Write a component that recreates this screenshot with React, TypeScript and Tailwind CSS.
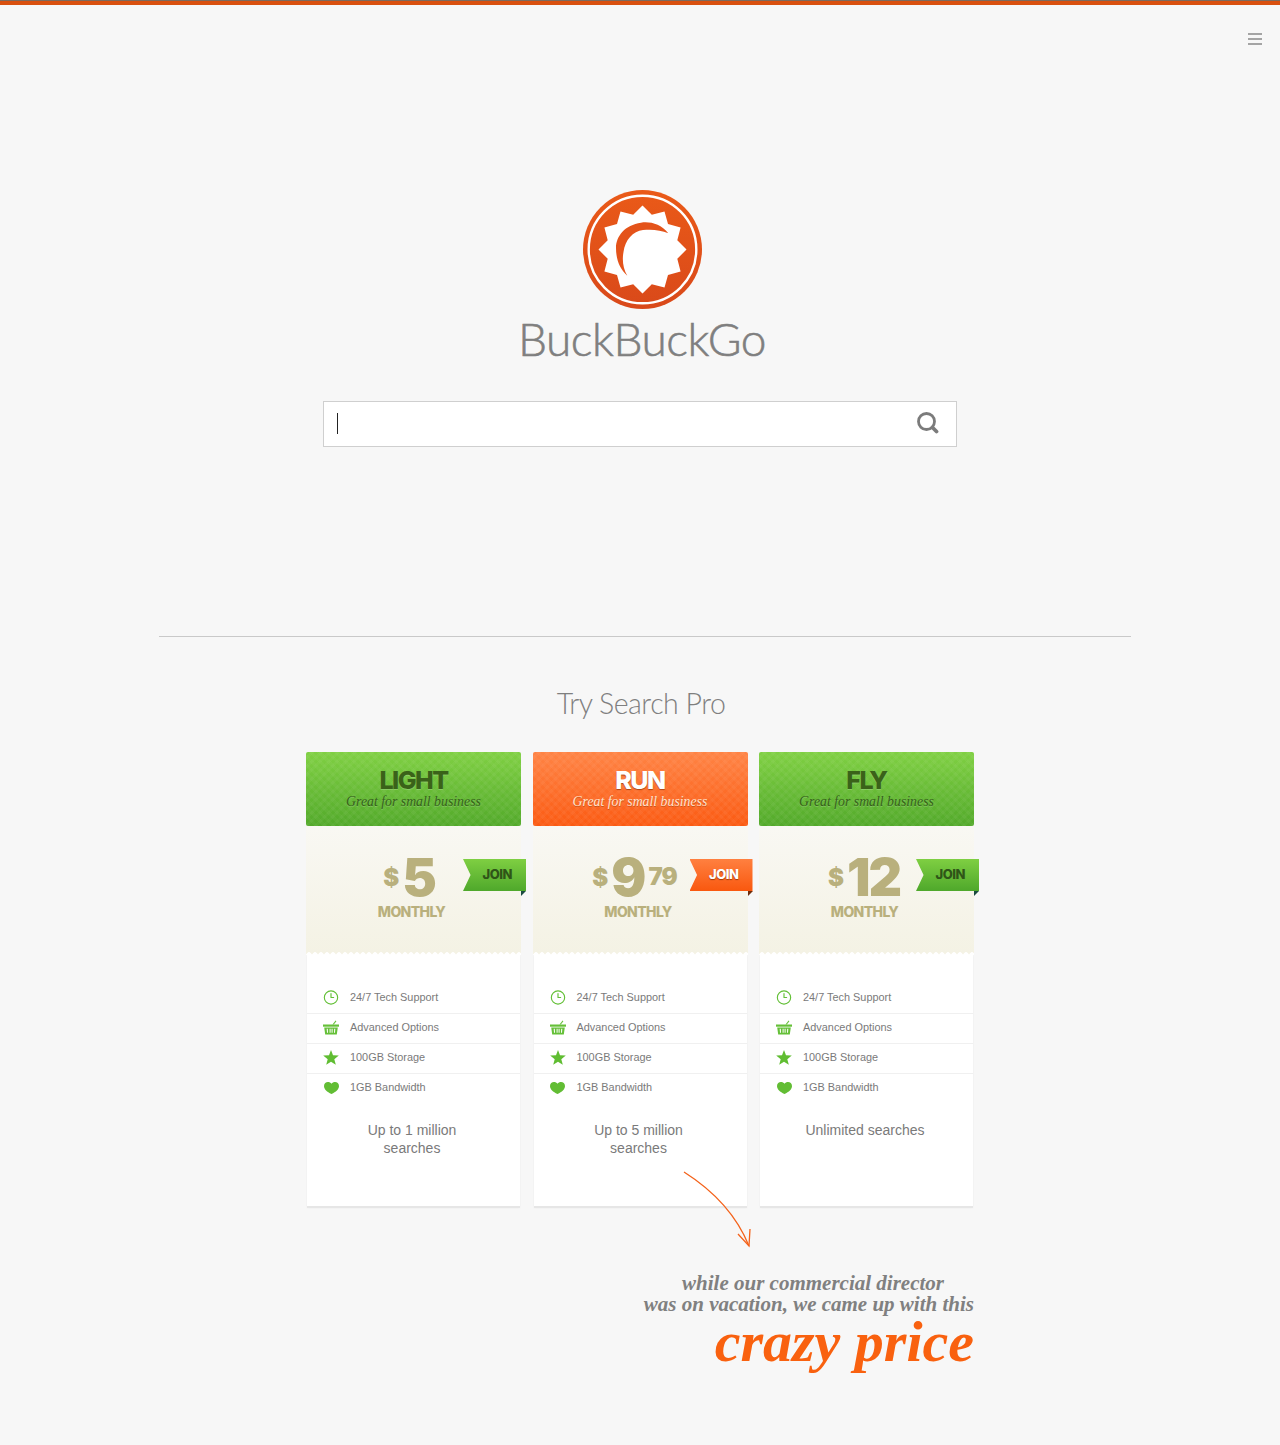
import React from "react";
import { Clock3 } from "lucide-react";

const features = ["24/7 Tech Support", "Advanced Options", "100GB Storage", "1GB Bandwidth"];

const plans = [
  {
    name: "LIGHT",
    head: "bg-[repeating-linear-gradient(45deg,rgba(255,255,255,.035)_0_3px,transparent_3px_6px),repeating-linear-gradient(-45deg,rgba(255,255,255,.035)_0_3px,transparent_3px_6px),linear-gradient(#80d043,#52a92a)]",
    title: "text-[#3a6219] [text-shadow:0_1px_0_rgba(255,255,255,.2)]",
    sub: "text-[#35601a] [text-shadow:0_1px_0_rgba(255,255,255,.2)]",
    ribbon: "bg-[linear-gradient(#7fcf42,#4fa82b)]",
    join: "text-[#2f5518]",
    fold: "border-t-[#1a4a40]",
    price: "pr-[9px]",
    amount: "5",
    cents: "",
    info: ["Up to 1 million", "searches"],
  },
  {
    name: "RUN",
    head: "bg-[repeating-linear-gradient(45deg,rgba(255,255,255,.035)_0_3px,transparent_3px_6px),repeating-linear-gradient(-45deg,rgba(255,255,255,.035)_0_3px,transparent_3px_6px),linear-gradient(#ff8445,#fb5a12)]",
    title: "text-white [text-shadow:0_1px_1px_rgba(120,40,0,.6)]",
    sub: "text-[#ffe3d0] [text-shadow:0_1px_0_rgba(120,40,0,.4)]",
    ribbon: "bg-[linear-gradient(#ff8040,#f9580f)]",
    join: "text-white [text-shadow:0_1px_1px_rgba(120,40,0,.7)]",
    fold: "border-t-[#6e2c0c]",
    price: "pr-[11px]",
    amount: "9",
    cents: "79",
    info: ["Up to 5 million", "searches"],
  },
  {
    name: "FLY",
    head: "bg-[repeating-linear-gradient(45deg,rgba(255,255,255,.035)_0_3px,transparent_3px_6px),repeating-linear-gradient(-45deg,rgba(255,255,255,.035)_0_3px,transparent_3px_6px),linear-gradient(#80d043,#52a92a)]",
    title: "text-[#3a6219] [text-shadow:0_1px_0_rgba(255,255,255,.2)]",
    sub: "text-[#35601a] [text-shadow:0_1px_0_rgba(255,255,255,.2)]",
    ribbon: "bg-[linear-gradient(#7fcf42,#4fa82b)]",
    join: "text-[#2f5518]",
    fold: "border-t-[#1a4a40]",
    price: "pr-[5px]",
    amount: "12",
    cents: "",
    info: ["Unlimited searches"],
  },
];

const sunPoints = Array.from({ length: 24 }, (_, i) => {
  const r = i % 2 === 0 ? 44 : 36;
  const a = (i * Math.PI) / 12 - Math.PI / 2;
  return `${(59.5 + r * Math.cos(a)).toFixed(1)},${(59.5 + r * Math.sin(a)).toFixed(1)}`;
}).join(" ");

const Logo = () => (
  <svg width="120" height="120" viewBox="0 0 120 120">
    <defs>
      <linearGradient id="logoFill" x1="0" y1="0" x2="0" y2="1">
        <stop offset="0" stopColor="#ea5a18" />
        <stop offset="1" stopColor="#d9491a" />
      </linearGradient>
    </defs>
    <circle cx="59.5" cy="59.5" r="59.5" fill="url(#logoFill)" />
    <circle cx="59.5" cy="59.5" r="53.8" fill="none" stroke="#fff" strokeWidth="2.4" />
    <polygon points={sunPoints} fill="#fff" />
    <path
      d="M85.3 43.3C78 34 67 31.3 58 32.7C42 35 33 46 33 58C33 70 37 79 44.3 85.7C40 78 39 70 40.5 62C42 50 50 41 60 40C69 39 78 40 85.3 43.3Z"
      fill="#e4531a"
    />
  </svg>
);

const BasketIcon = () => (
  <svg width="16" height="15" viewBox="0 0 16 15" fill="#65c038">
    <path d="M9.5 4.5L12.6 .6l.8.6-2.6 3.3z" />
    <rect x="0" y="4.5" width="16" height="2.2" />
    <path d="M1.2 7.5h13.6l-1 7H2.2zM3.7 8.8l.3 4h1l-.2-4zM6.6 8.8v4h1v-4zM8.6 8.8v4h1v-4zM11.2 8.8l-.2 4h1l.3-4z" fillRule="evenodd" />
  </svg>
);

const StarIcon = () => (
  <svg width="16" height="15" viewBox="0 0 16 15" fill="#60bd32">
    <path d="M8 0l2 5.3 5.8.3-4.5 3.6 1.500 5.600L8 11.700l-4.800 3.100 1.500-5.600L.2 5.600 6 5.300z" />
  </svg>
);

const HeartIcon = () => (
  <svg width="15" height="12" viewBox="0 0 15 12" fill="#62bd34">
    <path d="M7.500 12C3 9.600 0 7.300 0 3.900 0 1.500 1.900 0 3.900 0c1.500 0 2.800.7 3.600 1.700C8.300.7 9.600 0 11.100 0 13.100 0 15 1.500 15 3.900c0 3.400-3 5.700-7.500 8.100z" />
  </svg>
);

const featureIcon = (index: number) => {
  if (index === 0) return <Clock3 size={17} strokeWidth={1.7} color="#62bf35" />;
  if (index === 1) return <BasketIcon />;
  if (index === 2) return <StarIcon />;
  return <HeartIcon />;
};

const App = () => {
  return (
    <div className="relative min-h-[1445px] bg-[#f7f7f7] font-['Liberation_Sans',sans-serif]">
      <div className="h-[5px] border-t border-t-[#7d6a5c] bg-[#d9500f]" />
      <div className="flex justify-end pt-[28px] pr-[18px]">
        <div className="flex w-[14px] flex-col gap-[3px]">
          <span className="h-[2px] bg-[#a4a4a4]" />
          <span className="h-[2px] bg-[#a4a4a4]" />
          <span className="h-[2px] bg-[#a4a4a4]" />
        </div>
      </div>

      <div className="flex flex-col items-center pt-[145px]">
        <div className="ml-[5px]">
          <Logo />
        </div>
        <h1 className="mt-[1px] ml-[4px] font-['Lato',sans-serif] text-[46px] leading-[56px] font-light tracking-[-.5px] text-[#7f7f7f] [-webkit-text-stroke:.6px_#7f7f7f]">
          BuckBuckGo
        </h1>
        <div className="mt-[34px] flex h-[46px] w-[634px] items-center justify-between border border-[#cfcfcf] bg-white pr-[17px] pl-[13px]">
          <span className="mb-[1px] h-[21px] w-px bg-[#222]" />
          <svg className="mb-[2px]" width="22" height="22" viewBox="0 0 22 22" fill="none" stroke="#7b7b7b">
            <circle cx="9.500" cy="9.500" r="8" strokeWidth="2.800" />
            <path d="M15.500 15.500l4 4" strokeWidth="3.800" strokeLinecap="round" />
          </svg>
        </div>

        <div className="mt-[189px] ml-[10px] h-px w-[972px] bg-[#c9c9c9]" />
        <h2 className="mt-[48px] ml-[2px] font-['Lato',sans-serif] text-[28.500px] leading-[36px] font-light tracking-[-.5px] text-[#7f7f7f]">
          Try Search Pro
        </h2>

        <div className="mt-[31px] flex w-[668px] justify-between">
          {plans.map((plan) => (
            <div key={plan.name} className="relative w-[215px]">
              <div className={`flex h-[74px] flex-col items-center rounded-[2px] pt-[14px] ${plan.head}`}>
                <h3 className={`font-['Inter',sans-serif] text-[25px] leading-[28px] font-extrabold tracking-[-1.500px] ${plan.title}`}>
                  {plan.name}
                </h3>
                <p className={`font-['Liberation_Serif',serif] text-[13.800px] leading-[16px] italic ${plan.sub}`}>
                  Great for small business
                </p>
              </div>

              <div className="relative h-[129px] bg-[linear-gradient(#f9f8f3,#f4f2e4)] font-['Inter',sans-serif] text-[#b9b07d]">
                <div className={`flex h-[78px] items-center justify-center pt-[26px] ${plan.price}`}>
                  <span className="mr-[3px] text-[24px] leading-none font-black">$</span>
                  <span className="text-[52px] leading-none font-black tracking-[-2px]">{plan.amount}</span>
                  {plan.cents && (
                    <span className="mb-[3px] ml-[4px] text-[24px] leading-none font-black tracking-[-1px]">{plan.cents}</span>
                  )}
                </div>
                <p className="w-[211px] text-center text-[14px] leading-[16px] font-extrabold tracking-[-.6px]">
                  MONTHLY
                </p>
                <div className="absolute inset-x-0 bottom-0 h-[4px] bg-[radial-gradient(circle_at_3px_4px,#ffffff_2.500px,transparent_3px)] bg-[length:6px_4px]" />

                <div className={`absolute top-[33px] right-[-5px] flex h-[32px] w-[63px] items-center justify-end pr-[14px] [clip-path:polygon(0_0,100%_0,100%_100%,0_100%,12%_50%)] ${plan.ribbon}`}>
                  <span className={`text-[13px] font-extrabold tracking-[-.5px] ${plan.join}`}>JOIN</span>
                </div>
                <span className={`absolute top-[65px] right-[-5px] h-0 w-0 border-t-[5px] border-r-[5px] border-r-transparent ${plan.fold}`} />
              </div>

              <div className="mx-px h-[253px] border-b-2 border-[#e6e6e6] bg-white pt-[29px] shadow-[0_0_2px_rgba(0,0,0,.05)]">
                <div>
                  {features.map((feature, index) => (
                    <div
                      key={feature}
                      className="flex h-[30px] items-center border-b border-[#f0f0f0] pb-[2px] pl-[16px] text-[10.900px] text-[#7a7a7a] last:border-b-0 last:pb-[3px]"
                    >
                      <span className="flex w-[16px] justify-center">{featureIcon(index)}</span>
                      <span className="ml-[11px]">{feature}</span>
                    </div>
                  ))}
                </div>
                <div className="mt-[17px] pr-[3px] text-center text-[14px] leading-[18px] text-[#7a7a7a]">
                  {plan.info.map((line) => (
                    <p key={line}>{line}</p>
                  ))}
                </div>
              </div>
            </div>
          ))}
        </div>

        <div className="relative w-[668px] pt-[65px] text-right font-['Liberation_Serif',serif] font-bold italic">
          <svg className="absolute top-[-37px] left-[375px]" width="72" height="78" viewBox="0 0 72 78" fill="none" stroke="#f4621a" strokeWidth="1.300">
            <path d="M3 1C33 20 55 43 68 75" />
            <path d="M57 63l11 12 1-17" />
          </svg>
          <p className="pr-[30px] text-[21px] leading-[21px] text-[#808080]">while our commercial director</p>
          <p className="text-[21px] leading-[21px] text-[#808080]">was on vacation, we came up with this</p>
          <p className="text-[58px] leading-[54px] text-[#f9610f]">crazy price</p>
        </div>
      </div>
    </div>
  );
};

export default App;
